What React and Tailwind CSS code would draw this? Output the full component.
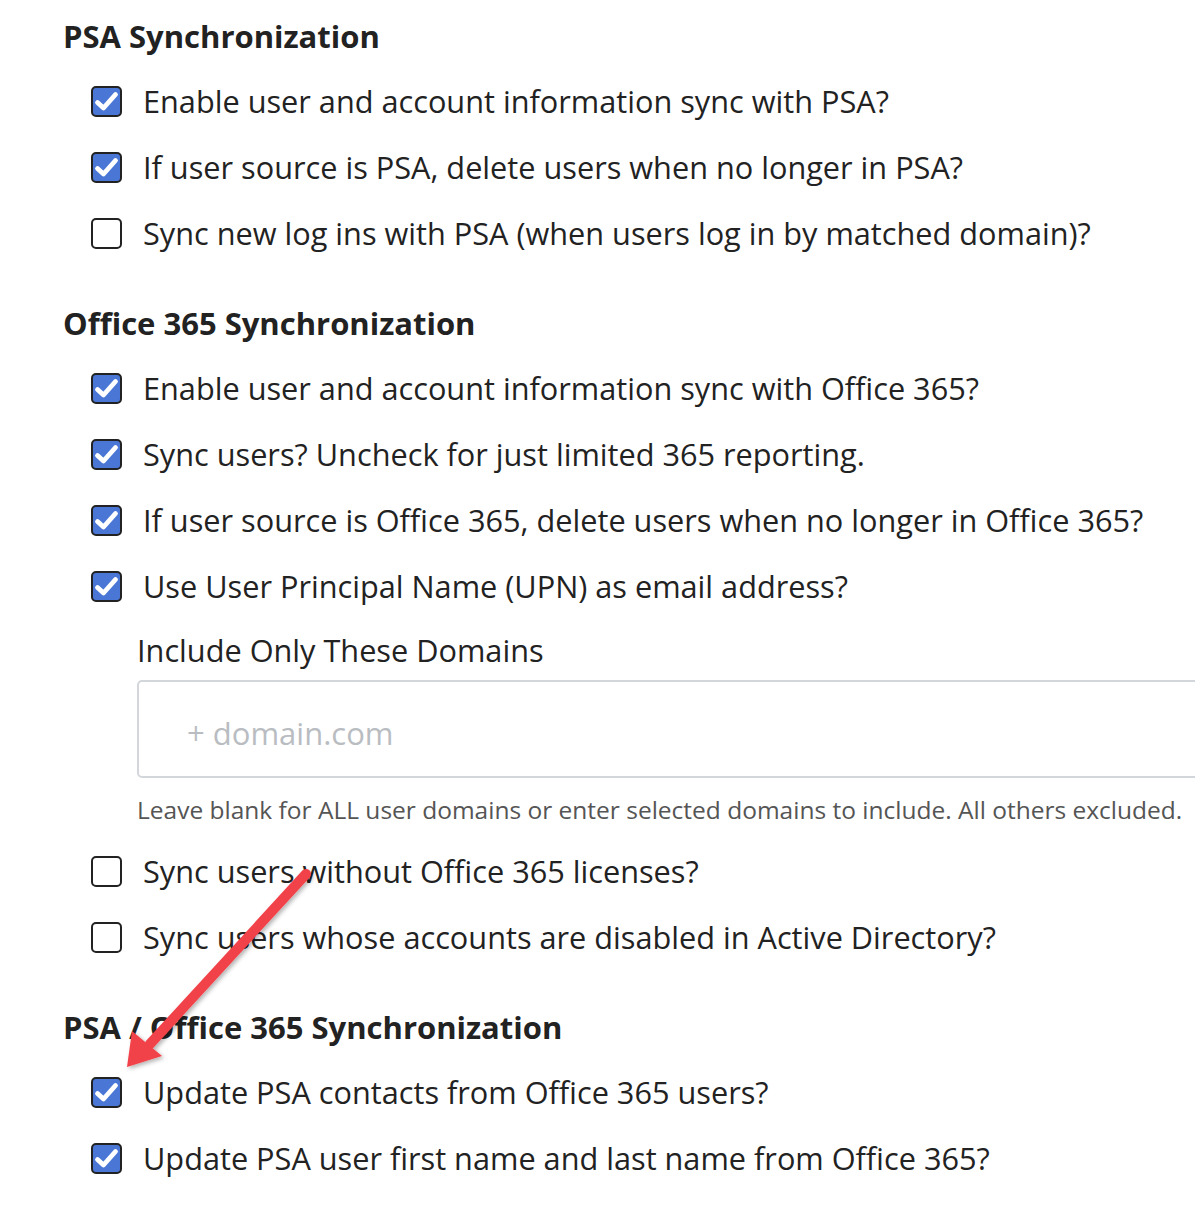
import React from "react";

const font = { fontFamily: '"Open Sans", "Noto Sans", sans-serif' };

function Box({ checked }) {
  if (checked) {
    return (
      <div className="w-[31px] h-[31px] shrink-0 rounded-[5px] border-[2px] border-[#222] bg-[#4a77d6] flex items-center justify-center">
        <svg width="27" height="27" viewBox="0 0 27 27">
          <path d="M4.5 14.5 L10.5 20 L22.5 6.5" fill="none" stroke="white" strokeWidth="4.8" strokeLinecap="round" strokeLinejoin="round" />
        </svg>
      </div>
    );
  }
  return <div className="w-[31px] h-[31px] shrink-0 rounded-[5px] border-[2px] border-[#222] bg-white" />;
}

function Row({ checked, children }) {
  return (
    <div className="h-[66px] flex items-center pl-[28px]">
      <Box checked={checked} />
      <span className="ml-[21px] text-[30.7px] text-[#222] whitespace-nowrap">{children}</span>
    </div>
  );
}

function Heading({ children, className = "" }) {
  return (
    <div className={"h-[50px] flex items-center text-[31px] font-bold text-[#222] whitespace-nowrap " + className}>
      {children}
    </div>
  );
}

export default function App() {
  return (
    <div style={font} className="relative w-[1195px] h-[1221px] overflow-hidden bg-white pl-[63px] pt-[11px]">
      <Heading className="mb-[7px]">PSA Synchronization</Heading>
      <Row checked>Enable user and account information sync with PSA?</Row>
      <Row checked>If user source is PSA, delete users when no longer in PSA?</Row>
      <Row>Sync new log ins with PSA (when users log in by matched domain)?</Row>

      <Heading className="mt-[32px] mb-[7px]">Office 365 Synchronization</Heading>
      <Row checked>Enable user and account information sync with Office 365?</Row>
      <Row checked>Sync users? Uncheck for just limited 365 reporting.</Row>
      <Row checked>If user source is Office 365, delete users when no longer in Office 365?</Row>
      <Row checked>Use User Principal Name (UPN) as email address?</Row>

      <div className="pl-[74px]">
        <div className="h-[40px] mt-[11px] flex items-center text-[30.7px] text-[#222] whitespace-nowrap">Include Only These Domains</div>
        <div className="mt-[10px] w-[1100px] h-[98px] border-[2px] border-[#d3d6da] rounded-[5px] flex items-center pl-[48px] pt-[8px]">
          <span className="text-[31px] text-[#b9bdc2] whitespace-nowrap">+ domain.com</span>
        </div>
        <div className="h-[42px] mt-[11px] mb-[7px] flex items-center text-[24.5px] text-[#555] whitespace-nowrap">
          Leave blank for ALL user domains or enter selected domains to include. All others excluded.
        </div>
      </div>

      <Row>Sync users without Office 365 licenses?</Row>
      <Row>Sync users whose accounts are disabled in Active Directory?</Row>

      <Heading className="mt-[32px] mb-[7px]">PSA / Office 365 Synchronization</Heading>
      <Row checked>Update PSA contacts from Office 365 users?</Row>
      <Row checked>Update PSA user first name and last name from Office 365?</Row>

      <svg className="absolute left-0 top-0 pointer-events-none" width="1195" height="1221" viewBox="0 0 1195 1221">
        <defs>
          <filter id="sh" x="-20%" y="-20%" width="140%" height="140%">
            <feDropShadow dx="2" dy="2" stdDeviation="2" floodColor="#000" floodOpacity="0.3" />
          </filter>
        </defs>
        <g filter="url(#sh)">
          <line x1="306" y1="874" x2="150" y2="1044" stroke="#f2424a" strokeWidth="10" strokeLinecap="round" />
          <polygon points="127,1067 132,1031 162,1056" fill="#f2424a" />
        </g>
      </svg>
    </div>
  );
}
